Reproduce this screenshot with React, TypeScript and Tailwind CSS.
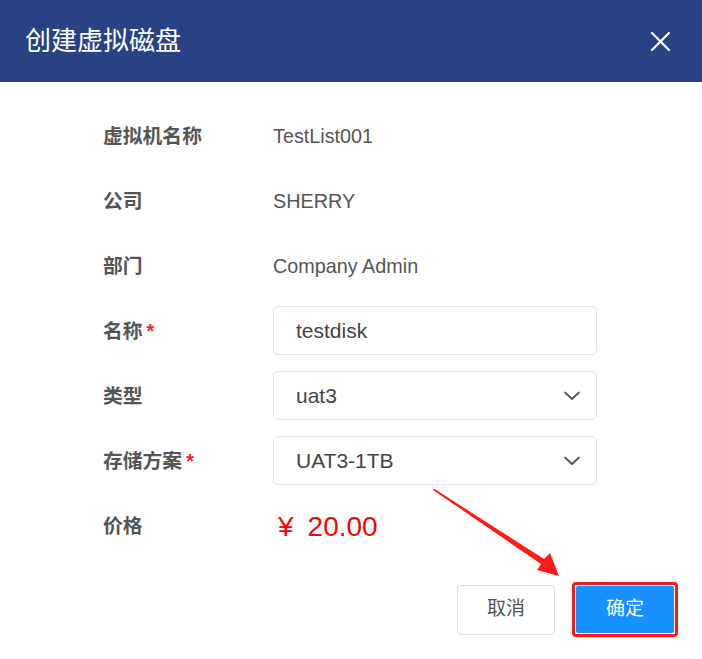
import React from "react";

const font = { fontFamily: '"Liberation Sans", Arial, "Noto Sans CJK SC", sans-serif' };

function Chevron() {
  return (
    <svg width="18" height="10" viewBox="0 0 18 10" className="text-[#555]">
      <path d="M2 1.5 L9 8 L16 1.5" fill="none" stroke="currentColor" strokeWidth="1.8" strokeLinecap="round" strokeLinejoin="round" />
    </svg>
  );
}

function Row({ label, required, children }: { label: string; required?: boolean; children: React.ReactNode }) {
  return (
    <div className="flex h-[65px] items-center">
      <div className="w-[170px] pt-[2px] text-[19.8px] font-bold text-[#555]">
        {label}
        {required && <span className="ml-1 text-[#f5222d]">*</span>}
      </div>
      {children}
    </div>
  );
}

function Field({ value, select }: { value: string; select?: boolean }) {
  return (
    <div className="flex h-[49px] w-[324px] items-center justify-between rounded-[5px] border border-[#e3e3e8] pl-[22px] pr-[15px] text-[21px] text-[#444]">
      <span>{value}</span>
      {select && <Chevron />}
    </div>
  );
}

export default function App() {
  return (
    <div className="relative h-[659px] w-[702px] bg-white" style={font}>
      <header className="flex h-[82px] items-center justify-between bg-[#284283] pl-[25px] pr-[31px]">
        <h1 className="text-[26px] text-white">创建虚拟磁盘</h1>
        <svg width="21" height="21" viewBox="0 0 21 21">
          <path d="M2 2 L19 19 M19 2 L2 19" stroke="white" strokeWidth="2.2" strokeLinecap="round" />
        </svg>
      </header>

      <div className="pl-[103px] pt-[21px]">
        <Row label="虚拟机名称">
          <span className="pt-[2px] text-[19.8px] text-[#555]">TestList001</span>
        </Row>
        <Row label="公司">
          <span className="pt-[2px] text-[19.8px] text-[#555]">SHERRY</span>
        </Row>
        <Row label="部门">
          <span className="pt-[2px] text-[19.8px] text-[#555]">Company Admin</span>
        </Row>
        <Row label="名称" required>
          <Field value="testdisk" />
        </Row>
        <Row label="类型">
          <Field value="uat3" select />
        </Row>
        <Row label="存储方案" required>
          <Field value="UAT3-1TB" select />
        </Row>
        <Row label="价格">
          <span className="flex items-baseline pl-[5px] pt-[2px] text-[28px] text-[#ff0000]">
            <span>¥</span>
            <span className="ml-[14px]">20.00</span>
          </span>
        </Row>
      </div>

      <div className="mt-[24px] flex items-center justify-end gap-[17px] pr-[24px]">
        <button className="h-[50px] w-[98px] rounded-[4px] border border-[#dcdde3] bg-white text-[19px] text-[#555]">
          取消
        </button>
        <div className="rounded-[4px] border-[3px] border-[#ff1a1a] p-px">
          <button className="h-[47px] w-[98px] rounded-[2px] bg-[#1890ff] text-[19px] text-white">确定</button>
        </div>
      </div>

      <svg className="pointer-events-none absolute left-0 top-0" width="702" height="659">
        <polygon points="433,490 434.5,489 544,559 550,553 559,576 537,570 541,564" fill="#ff1a1a" />
      </svg>
    </div>
  );
}
